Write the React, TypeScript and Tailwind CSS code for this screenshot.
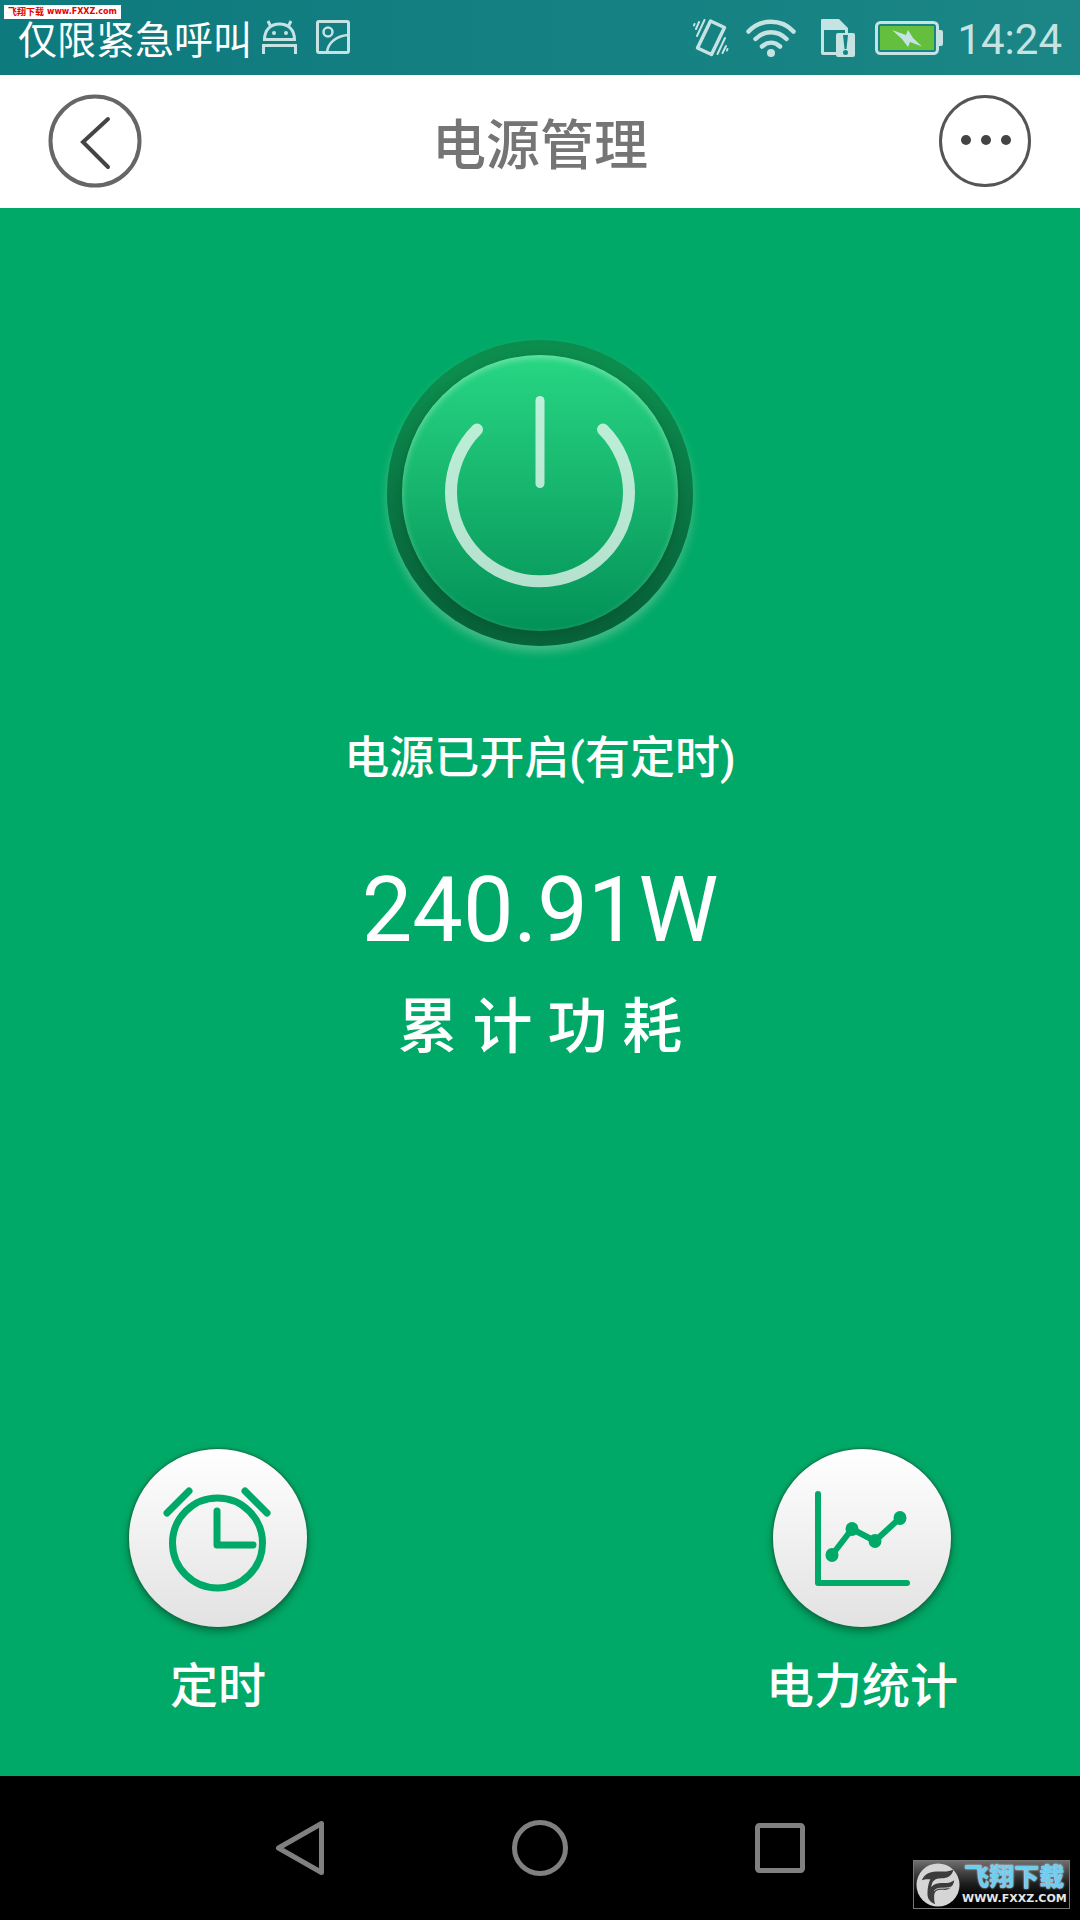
import React from 'react';

const StatusBar: React.FC = () => (
  <div className="h-[75px] flex items-center justify-between pl-[18px] pr-[18px] bg-linear-to-r from-[#0d7a7e] to-[#1b8685] text-[#c5e3e3]">
    <div className="flex items-center">
      <span className="pt-1.5 text-white text-[39px] leading-[60px]">仅限紧急呼叫</span>

      <svg className="ml-[10px] w-[36px] h-[36px]" viewBox="0 0 36 36" fill="none" stroke="currentColor" strokeWidth="3">
        <path d="M2.500 19.500C2.500 9.500 9 4 17.500 4s15 5.500 15 15.500z" />
        <path d="M9 7 6 1M26 7l3-6" />
        <path d="M1.500 34V25.500h32V34" />
        <circle cx="12" cy="13" r="2" fill="currentColor" stroke="none" />
        <circle cx="24" cy="13" r="2" fill="currentColor" stroke="none" />
      </svg>

      <svg className="ml-[17px] w-[36px] h-[36px]" viewBox="0 0 36 36" fill="none" stroke="currentColor" strokeWidth="3">
        <rect x="2.500" y="1.500" width="31" height="31" rx="1.500" />
        <circle cx="13" cy="12" r="4.500" strokeWidth="2.500" />
        <path d="M12 32c1-9 9-16 21-17" strokeWidth="2.500" />
      </svg>
    </div>

    <div className="flex items-center">
      {/* vibrate */}
      <svg className="w-[36px] h-[40px]" viewBox="0 0 36 40" fill="none" stroke="currentColor" strokeLinecap="round" strokeLinejoin="round">
        <path d="M17.500 3 31.500 9.500 18.500 36.500 4.500 30z" strokeWidth="3.500" />
        <path d="M11.500 2 4 18M6 4 3 11M1.500 6 1 7.500" strokeWidth="2" />
        <path d="M32 20 24.500 36M33 28l-3.500 7M34.500 31l-.5 1.500" strokeWidth="2" />
      </svg>

      {/* wifi */}
      <svg className="ml-[17px] w-[50px] h-[40px]" viewBox="0 0 50 40" fill="none" stroke="currentColor" strokeWidth="4.500" strokeLinecap="round">
        <path d="M2.500 13.500C14.500 .5 35.500 .5 47.500 13.500" />
        <path d="M9.500 21C18.500 12 31.500 12 40.500 21" />
        <path d="M16 28.500c5.500-5 12.500-5 18 0" />
        <circle cx="25" cy="35" r="4" fill="currentColor" stroke="none" />
      </svg>

      {/* sim card missing */}
      <svg className="ml-6 w-[36px] h-[40px]" viewBox="0 0 36 40" fill="currentColor">
        <path fillRule="evenodd" d="M2 1h17l9 9v6h-3v-4H4v22h12v3H3q-2 0-2-2V2q0-1 1-1z" />
        <path fillRule="evenodd" d="M18 15h15q2 0 2 2v20q0 2-2 2H18q-2 0-2-2V17q0-2 2-2zm5 2 1.500 14h2L28 17zm2.500 15a2.500 2.500 0 1 0 0 5 2.500 2.500 0 0 0 0-5z" />
      </svg>

      {/* battery */}
      <svg className="ml-[19px] w-[68px] h-[34px]" viewBox="0 0 68 34" fill="none">
        <rect x="1.500" y="1.500" width="61" height="31" rx="4" stroke="currentColor" strokeWidth="3" />
        <rect x="5" y="5" width="54" height="24" fill="#63bf3d" />
        <path d="M63 9h3q2 0 2 2v12q0 2-2 2h-3z" fill="currentColor" />
        <path d="M17 9 31 14 33 9 38 17 47 25.500 35 21 33 26 27 18z" fill="currentColor" />
      </svg>

      <time className="ml-[14px] pt-1 text-[42px] leading-[60px]">14:24</time>
    </div>
  </div>
);

const Header: React.FC = () => (
  <header className="h-[133px] flex items-center justify-between px-12 pb-0.5 text-[#444444] bg-white">
    <button type="button" aria-label="返回">
      <svg className="w-[94px] h-[94px]" viewBox="0 0 94 94" fill="none" stroke="currentColor">
        <circle cx="47" cy="47" r="44.500" stroke="#666666" strokeWidth="4" />
        <path d="M60 25 35 48 60 73" strokeWidth="4" strokeLinecap="round" />
      </svg>
    </button>
    <h1 className="pt-3 text-[#757575] text-[54px] font-medium leading-[80px]">电源管理</h1>
    <button type="button" aria-label="更多">
      <svg className="w-[94px] h-[94px]" viewBox="0 0 94 94" fill="currentColor">
        <circle cx="47" cy="47" r="44.500" fill="none" stroke="#555555" strokeWidth="3" />
        <circle cx="28" cy="46" r="5" />
        <circle cx="48" cy="46" r="5" />
        <circle cx="68" cy="46" r="5" />
      </svg>
    </button>
  </header>
);

const PowerButton: React.FC = () => (
  <button
    type="button"
    aria-label="电源开关"
    className="size-[306px] p-[15px] rounded-full bg-linear-to-b from-[#0c8d4e] from-10% to-[#08633a] to-90% shadow-[0_6px_10px_rgba(150,210,180,0.450)]"
  >
    <span className="flex size-full items-center justify-center rounded-full bg-linear-to-b from-[#27d783] to-[#029258] shadow-[inset_0_3px_6px_rgba(180,240,205,0.500),0_3px_8px_rgba(0,70,40,0.400)]">
      <svg className="w-[190px] h-[200px]" viewBox="0 -5 190 200" fill="none" stroke="#ffffff" strokeOpacity="0.700" strokeLinecap="round">
        <path d="M32 31.500A89 89 0 1 0 158 31.500" strokeWidth="12" />
        <path d="M95 2.500v83" strokeWidth="9" />
      </svg>
    </span>
  </button>
);

interface ActionProps {
  label: string;
  children: React.ReactNode;
}

const Action: React.FC<ActionProps> = ({ label, children }) => (
  <button type="button" className="w-48 flex flex-col items-center text-white">
    <span className="size-[178px] rounded-full bg-linear-to-b from-white to-[#e2e2e2] text-[#00a967] shadow-[0_0_2px_1px_rgba(40,90,60,0.700),0_4px_8px_rgba(0,60,35,0.550)]">
      <svg className="size-full" viewBox="0 0 178 178" fill="none" stroke="currentColor" strokeLinecap="round" strokeLinejoin="round">
        {children}
      </svg>
    </span>
    <span className="mt-[26px] text-5xl font-medium leading-[68px]">{label}</span>
  </button>
);

const NavBar: React.FC = () => (
  <nav className="h-36 flex items-center justify-center gap-[180px] bg-black text-[#808080]">
    <button type="button" aria-label="后退">
      <svg className="size-[60px]" viewBox="0 0 60 60" fill="none" stroke="currentColor" strokeWidth="5" strokeLinejoin="round">
        <path d="M8.500 30 51.500 5.500v49z" />
      </svg>
    </button>
    <button type="button" aria-label="主页">
      <svg className="size-[60px]" viewBox="0 0 60 60" fill="none" stroke="currentColor" strokeWidth="5">
        <circle cx="30" cy="30" r="25.500" />
      </svg>
    </button>
    <button type="button" aria-label="最近任务">
      <svg className="size-[60px]" viewBox="0 0 60 60" fill="none" stroke="currentColor" strokeWidth="5">
        <rect x="7.500" y="7.500" width="45" height="45" rx="2" />
      </svg>
    </button>
  </nav>
);

const Watermark: React.FC = () => (
  <div className="absolute right-[10px] bottom-[11px] flex items-center gap-[2px] w-[157px] h-[49px] pl-[2px] border border-[#777777] bg-linear-to-b from-[#6e6e6e] via-[#1c1c1c] to-black">
    <svg className="w-[44px] h-[44px] shrink-0" viewBox="0 0 46 46">
      <circle cx="23" cy="23" r="22.500" fill="#d5d5d5" />
      <path d="M6 18c4-8 10-9 18-9 6 0 10 0 15-2-1 6-6 9-12 9-8 0-10 3-11 9 5-5 10-4 14-4 4 0 7-1 10-3-1 7-6 11-12 10-7 0-9 2-9 7 0 3 0 5 1 8-6-2-8-6-8-11 0-6 1-11 3-15-4 0-6 0-9 1z" fill="#3c3c3c" />
      <path d="M19 29c4-4 9-2 13-3 3 0 5-1 7-2" stroke="#d5d5d5" strokeWidth="1" fill="none" />
    </svg>
    <div className="flex flex-col items-center">
      <span className="text-[25px] font-black leading-[28px] text-[#6fcdf0] [text-shadow:0_0_2px_#ffffff]">飞翔下载</span>
      <span className="font-['DejaVu_Sans'] text-[11px] font-bold leading-[14px] text-[#e6e6e6]">WWW.FXXZ.COM</span>
    </div>
  </div>
);

const App: React.FC = () => (
  <div className="relative min-h-screen flex flex-col bg-[#00a967] font-[Roboto,'Noto_Sans_CJK_SC',sans-serif]">
    <StatusBar />
    <Header />

    <main className="flex-1 flex flex-col items-center pt-[132px] pb-[55px] text-white">
      <PowerButton />
      <p className="mt-20 text-[45px] font-medium leading-[66px]">电源已开启(有定时)</p>
      <p className="mt-[66px] text-[90px] leading-[106px]">240.91W</p>
      <p className="mt-5 text-6xl font-medium leading-[88px]">累 计 功 耗</p>

      <div className="mt-auto w-full flex justify-between px-[122px]">
        <Action label="定时">
          <circle cx="88.500" cy="94" r="45" strokeWidth="7" />
          <path d="M88 62v34h36" strokeWidth="7" />
          <path d="M38 64 60 42M116 42l22 22" strokeWidth="7" />
        </Action>
        <Action label="电力统计">
          <path d="M45 45v89h89" strokeWidth="6" />
          <path d="M59 106 79 80 102 92 127 69" strokeWidth="6" />
          <g fill="currentColor" stroke="none">
            <ellipse cx="59" cy="106" rx="6.500" ry="7" />
            <ellipse cx="79" cy="80" rx="6.500" ry="7" />
            <ellipse cx="102" cy="92" rx="6.500" ry="7" />
            <ellipse cx="127" cy="69" rx="6.500" ry="7" />
          </g>
        </Action>
      </div>
    </main>

    <NavBar />

    <div className="absolute left-1 top-[5px] flex items-center h-[14px] px-1 bg-white text-[#e60000] text-[9px] font-bold leading-[14px] whitespace-nowrap">
      飞翔下载
      <span className="ml-[3px] font-['DejaVu_Sans'] text-[8px]">www.FXXZ.com</span>
    </div>
    <Watermark />
  </div>
);

export default App;
